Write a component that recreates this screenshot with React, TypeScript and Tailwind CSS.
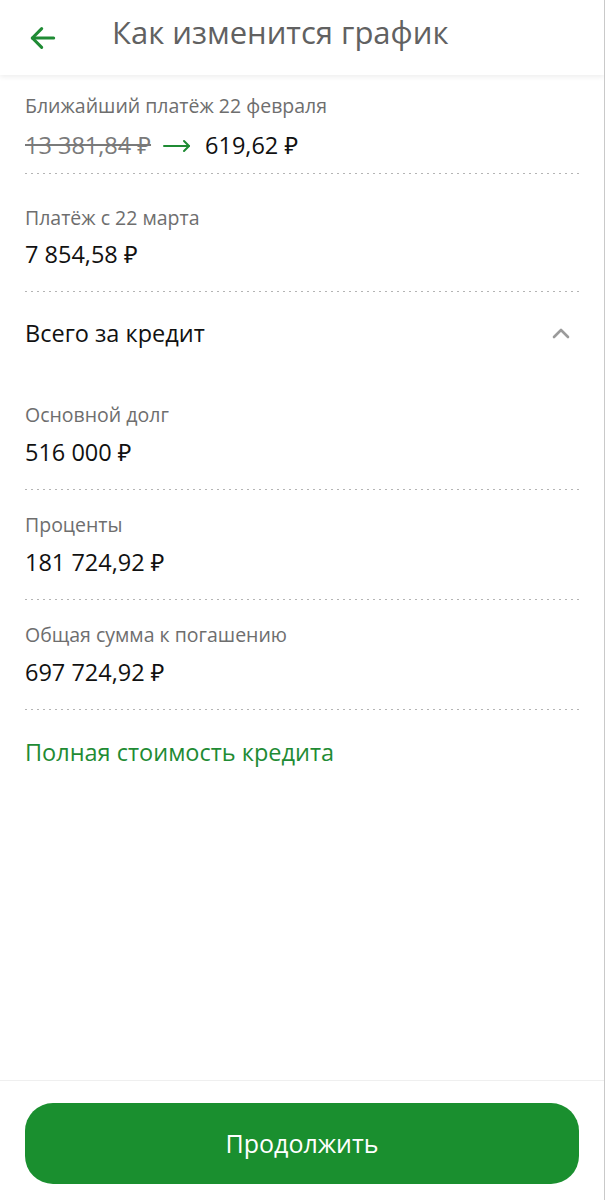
import React from "react";

const font = { fontFamily: '"Open Sans", "Noto Sans", sans-serif' };

function Dots() {
  return (
    <div className="h-px w-full bg-[linear-gradient(to_right,#b4b4b4_2px,transparent_2px)] bg-[length:6px_1px]" />
  );
}

interface RowProps {
  label: string;
  value: React.ReactNode;
  top: string;
  gap: string;
  bottom: string;
}

function Row({ label, value, top, gap, bottom }: RowProps) {
  return (
    <div>
      <div className={`${top} ${bottom} flex flex-col ${gap}`}>
        <div className="text-[19.5px] leading-6 text-[#6e6e6e]">{label}</div>
        <div className="text-[23.5px] leading-7 text-[#111]">{value}</div>
      </div>
      <Dots />
    </div>
  );
}

export default function App() {
  return (
    <div
      className="w-[605px] h-[1200px] bg-white flex flex-col border-r border-[#c9c9c9] overflow-hidden"
      style={font}
    >
      {/* шапка */}
      <header className="h-[75px] shrink-0 flex items-center pl-[27px] shadow-[0_2px_5px_rgba(0,0,0,0.07)] relative z-10">
        <svg width="32" height="32" viewBox="0 0 24 24" fill="none" stroke="#1f8b34" strokeWidth="2.3" strokeLinecap="round" strokeLinejoin="round">
          <path d="M20 12H4" />
          <path d="m11 19-7-7 7-7" />
        </svg>
        <h1 className="ml-[53px] text-[31px] leading-none text-[#616161] -mt-[10px]">Как изменится график</h1>
      </header>

      <main className="px-[25px] flex flex-col">
        <Row
          label="Ближайший платёж 22 февраля"
          top="pt-[19px]"
          gap="gap-[13px]"
          bottom="pb-[14px]"
          value={
            <span className="flex items-center">
              <span className="line-through text-[#7a7a7a]">13 381,84 ₽</span>
              <svg className="ml-[12px] mr-[14px] mt-[2px]" width="28" height="14" viewBox="0 0 28 14" fill="none" stroke="#1f8b34" strokeWidth="2" strokeLinecap="round" strokeLinejoin="round">
                <path d="M1 7h25" />
                <path d="M21 2l5 5-5 5" />
              </svg>
              <span>619,62 ₽</span>
            </span>
          }
        />
        <Row label="Платёж с 22 марта" value="7 854,58 ₽" top="pt-[32px]" gap="gap-[10px]" bottom="pb-[23px]" />

        <div className="flex items-center justify-between pt-[26px] pb-[55px]">
          <span className="text-[23.5px] leading-[30px] text-[#111]">Всего за кредит</span>
          <svg className="mr-[8px]" width="20" height="12" viewBox="0 0 20 12" fill="none" stroke="#9b9b9b" strokeWidth="2.6" strokeLinecap="round" strokeLinejoin="round">
            <path d="M3 10l7-7 7 7" />
          </svg>
        </div>

        <Row label="Основной долг" value="516 000 ₽" top="pt-0" gap="gap-[11px]" bottom="pb-[23px]" />
        <Row label="Проценты" value="181 724,92 ₽" top="pt-[23px]" gap="gap-[11px]" bottom="pb-[23px]" />
        <Row label="Общая сумма к погашению" value="697 724,92 ₽" top="pt-[23px]" gap="gap-[11px]" bottom="pb-[23px]" />

        <div className="pt-[27px] text-[23.5px] leading-[30px] text-[#1f8b34]">Полная стоимость кредита</div>
      </main>

      <div className="flex-1" />

      <footer className="border-t border-[#efefef] pt-[22px] pb-[16px] px-[25px]">
        <button className="w-full h-[81px] rounded-[28px] bg-[#1a8f2f] text-white text-[25px]">
          Продолжить
        </button>
      </footer>
    </div>
  );
}
